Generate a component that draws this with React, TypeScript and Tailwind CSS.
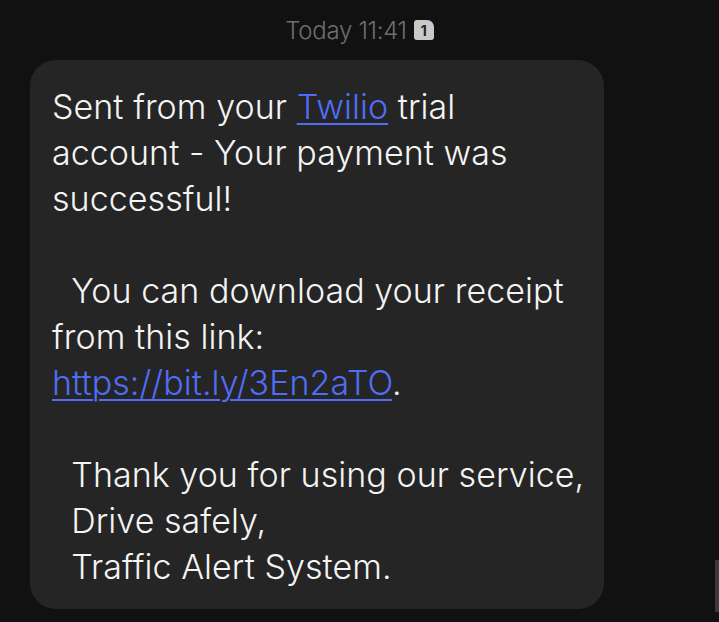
import React from 'react';

const lines: React.ReactNode[] = [
  <>Sent from your <a className="text-[#4f6ef5] underline decoration-[1.5px] underline-offset-[4px]">Twilio</a> trial</>,
  'account - Your payment was',
  'successful!',
  '',
  '  You can download your receipt',
  'from this link:',
  <><a className="text-[#4f6ef5] underline decoration-[1.5px] underline-offset-[4px]">https://bit.ly/3En2aTO</a>.</>,
  '',
  '  Thank you for using our service,',
  '  Drive safely,',
  '  Traffic Alert System.',
];

export default function App() {
  return (
    <div
      className="relative h-[622px] w-[719px] overflow-hidden bg-[#111111]"
      style={{ fontFamily: 'Inter, "Noto Sans", sans-serif' }}
    >
      {/* Timestamp */}
      <div className="flex h-[60px] items-start justify-center gap-[7px] pt-[15px]">
        <span className="text-[24px] font-light leading-[32px] tracking-[-0.3px] text-[#6e6e6e]">Today 11:41</span>
        <span className="mt-[5px] flex h-[20px] w-[20px] items-center justify-center rounded-[3px] rounded-tr-[7px] bg-[#c9c9c9] text-[14px] font-bold text-[#222]">
          1
        </span>
      </div>

      {/* Bubble */}
      <div className="ml-[30px] w-[574px] rounded-[26px] bg-[#252525] pt-[24px] pb-[19px] pl-[22px]">
        {lines.map((line, i) => (
          <div
            key={i}
            className="h-[46px] whitespace-pre text-[34px] font-[350] leading-[46px] tracking-[0.05px] text-[#f4f4f4]"
          >
            {line}
          </div>
        ))}
      </div>

      {/* scrollbar */}
      <div className="absolute right-0 top-[560px] h-[52px] w-[4px] bg-[#3a3a3a]" />
    </div>
  );
}
